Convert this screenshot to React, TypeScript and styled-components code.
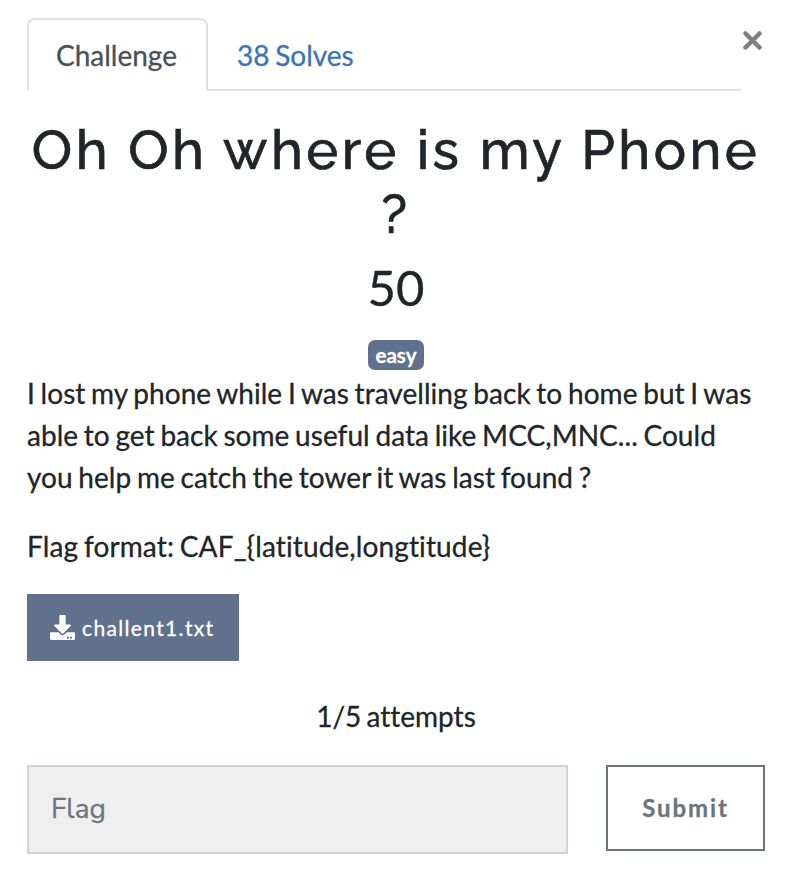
import React from "react";
import styled, { createGlobalStyle } from "styled-components";

const Global = createGlobalStyle`
  * { box-sizing: border-box; }
  body {
    margin: 0; background: #fff; color: #212529; font-family: Lato, sans-serif; font-size: 28px; line-height: 42px;
    font-variant-ligatures: none; -webkit-text-stroke: 0.3px currentColor;
  }
`;
const Dialog = styled.main`width: 802px; height: 882px; padding: 18px 37px 0 27px; position: relative;`;
const Tabs = styled.nav`display: flex; width: 714px; height: 73px; border-bottom: 2px solid #dee2e6;`;
const Tab = styled.a<{ $active?: boolean }>`
  height: 73px; padding: 14px 27px; border: 2px solid; border-color: ${p => p.$active ? "#dee2e6 #dee2e6 #fff" : "transparent"};
  border-radius: 8px 8px 0 0; color: ${p => p.$active ? "#495057" : "#3c74b4"}; background: ${p => p.$active ? "#fff" : "none"};
  white-space: nowrap; flex: none; width: ${p => p.$active ? "181px" : "auto"}; word-spacing: -1.5px;
`;
const Close = styled.button`
  position: absolute; left: 743px; top: 31px; width: 20px; height: 20px; padding: 0; border: 0; background: none; color: #7f7f7f;
  svg { display: block; }
`;
const Title = styled.h2`
  margin: 27px 0 0; font: 500 54px/64px Raleway, sans-serif; letter-spacing: 3.5px; text-align: center; white-space: nowrap;
  -webkit-text-stroke: 0.7px currentColor;
`;
const Points = styled.h3`margin: 12px 0 0; font-weight: 400; font-size: 49px; line-height: 58px; text-align: center;`;
const Tags = styled.div`display: flex; justify-content: center; margin-top: 24px;`;
const Tag = styled.span`
  width: 56px; height: 30px; border-radius: 7px; background: #61708c; color: #fff; font-size: 20.5px; font-weight: 700;
  line-height: 31px; text-align: center;
`;
const Text = styled.p<{ $spaced?: boolean }>`
  margin: 0 0 27px; padding-top: ${p => p.$spaced ? "2px" : 0}; white-space: nowrap; word-spacing: -1.5px;
  letter-spacing: ${p => p.$spaced ? "0.04px" : "0.12px"};
`;
const File = styled.a`
  display: flex; align-items: center; width: 212px; height: 67px; padding-left: 23px; gap: 7px; background: #61708c; color: #fff;
  font-size: 21px; letter-spacing: 1.35px;
`;
const Attempts = styled.p`margin: 34px 0 28px; text-align: center; word-spacing: -2px;`;
const Form = styled.form`display: flex; justify-content: space-between;`;
const Input = styled.input`
  width: 541px; height: 89px; padding: 0 22px 2px; border: 2px solid #ced4da; background: #efefef;
  font: 28px Avenir, "Nunito Sans", Nunito, Lato, sans-serif;
  &::placeholder { color: #6c757d; opacity: 1; }
`;
const Submit = styled.button`
  width: 159px; height: 86px; padding: 0 0 2px; border: 2px solid #6c757d; background: #fff; color: #6c757d; font: 700 24px Lato, sans-serif; letter-spacing: 1.9px;
`;

export default function App() {
  return (
    <Dialog>
      <Global />
      <Tabs><Tab $active>Challenge</Tab><Tab>38 Solves</Tab></Tabs>
      <Close type="button" aria-label="Close"><svg width="20" height="20" viewBox="0 0 20 20"><path d="M2.500 2.500L16.500 16.500M16.500 2.500L2.500 16.500" stroke="currentColor" strokeWidth="4.5" strokeLinecap="round" /></svg></Close>
      <Title>Oh Oh where is my Phone<br />?</Title>
      <Points>50</Points>
      <Tags><Tag>easy</Tag></Tags>
      <Text $spaced>I lost my phone while I was travelling back to home but I was<br />able to get back some useful data like MCC,MNC... Could<br />you help me catch the tower it was last found ?</Text>
      <Text>Flag format: CAF_{"{latitude,longtitude}"}</Text>
      <File>
        <svg width="25" height="25" viewBox="0 0 512 512"><path fill="currentColor" d="M216 0h80c13.300 0 24 10.700 24 24v168h87.700c17.800 0 26.700 21.500 14.100 34.100L269.700 378.300c-7.500 7.500-19.800 7.500-27.300 0L90.100 226.100c-12.600-12.600-3.700-34.100 14.100-34.100H192V24c0-13.300 10.700-24 24-24zm296 376v112c0 13.300-10.700 24-24 24H24c-13.300 0-24-10.700-24-24V376c0-13.300 10.700-24 24-24h146.700l49 49c20.100 20.100 52.500 20.100 72.600 0l49-49H488c13.300 0 24 10.700 24 24zm-124 88c0-11-9-20-20-20s-20 9-20 20 9 20 20 20 20-9 20-20zm64 0c0-11-9-20-20-20s-20 9-20 20 9 20 20 20 20-9 20-20z" /></svg>
        challent1.txt
      </File>
      <Attempts>1/5 attempts</Attempts>
      <Form><Input placeholder="Flag" disabled /><Submit type="button">Submit</Submit></Form>
    </Dialog>
  );
}
